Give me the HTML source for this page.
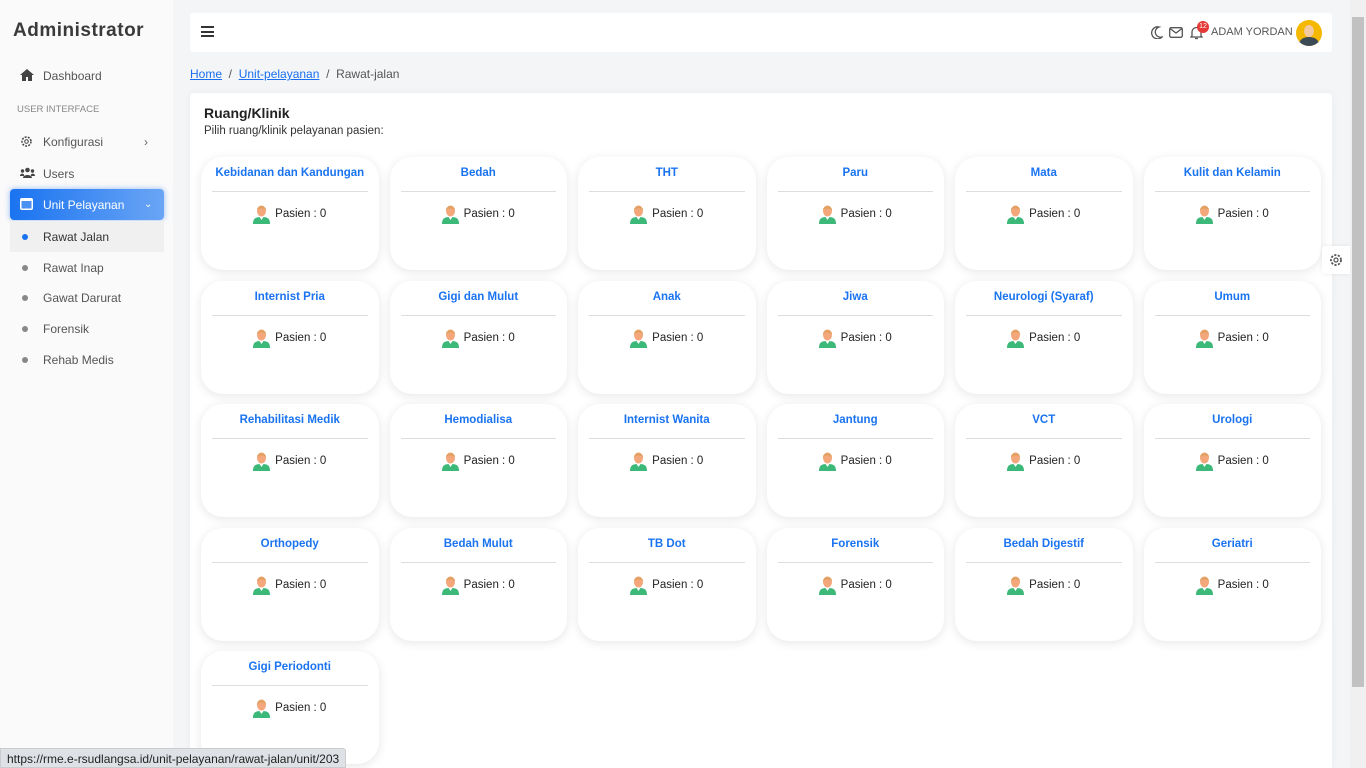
<!DOCTYPE html>
<html><head><meta charset="utf-8"><style>
*{box-sizing:border-box;margin:0;padding:0}
html,body{width:1366px;height:768px;overflow:hidden}
body{background:#f4f5f7;font-family:"Liberation Sans",sans-serif;color:#333;position:relative}
.sb{position:absolute;left:0;top:0;width:173px;height:768px;background:#fafafa}
.sb h1{position:absolute;left:13px;top:20px;font-size:19px;font-weight:bold;color:#3a3a3a;letter-spacing:.5px}
.it{position:absolute;left:10px;width:154px;height:31px;font-size:12px;color:#555;display:flex;align-items:center;padding-left:33px}
.it .ic{position:absolute;left:10px;top:9px}
.dot{position:absolute;left:12px;top:13px;width:6px;height:6px;border-radius:50%;background:#888}
.act{background:linear-gradient(90deg,#1a73f0,#6aa5f5);color:#fff;border-radius:4px;box-shadow:0 0 6px rgba(40,120,240,.5)}
.nav{position:absolute;left:190px;top:13px;width:1142px;height:39px;background:#fff;border-radius:3px}
.bc{position:absolute;left:190px;top:67px;font-size:12px;color:#555}
.bc a{color:#1a6ff0;text-decoration:underline}
.main{position:absolute;left:190px;top:93px;width:1142px;height:675px;background:#fff;border-radius:4px 4px 0 0;box-shadow:0 0 8px rgba(0,0,0,.05)}
.main h2{position:absolute;left:14px;top:12px;font-size:14px;color:#222}
.main p{position:absolute;left:14px;top:32px;font-size:11.5px;color:#333}
.grid{position:absolute;left:11px;top:64px;display:grid;grid-template-columns:repeat(6,177.5px);column-gap:11px;row-gap:10.5px}
.c{height:113px;background:#fff;border-radius:22px;box-shadow:0 2px 10px rgba(0,0,0,.1);position:relative}
.c .t{position:absolute;top:10px;left:0;right:0;text-align:center;font-size:11.5px;font-weight:bold;color:#1a73f0}
.c .l{position:absolute;top:34px;left:11px;right:11px;border-top:1px solid #ddd}
.c .pz{position:absolute;top:47px;left:0;right:0;display:flex;justify-content:center;align-items:center;font-size:11.5px;color:#222;gap:5px}
.scr{position:absolute;right:0;top:0;width:16px;height:768px;background:#f0f0f0}
.scr div{position:absolute;left:2px;top:17px;width:12px;height:670px;background:#c1c1c1}
.status{position:absolute;left:0;top:748px;height:20px;padding:0 6px;background:#dee1e6;font-size:12px;line-height:20px;color:#222;border:1px solid #ccc;border-radius:0 3px 0 0}
</style></head><body>
<div class="sb">
<h1>Administrator</h1>
<div class="it" style="top:60px"><svg class="ic" width="14" height="12" viewBox="0 0 14 12"><path d="M7 0L0 6h2v6h4V8h2v4h4V6h2z" fill="#444"/></svg>Dashboard</div>
<div style="position:absolute;left:17px;top:104px;font-size:9.5px;color:#888">USER INTERFACE</div>
<div class="it" style="top:126px"><svg class="ic" width="13" height="13" viewBox="0 0 13 13"><circle cx="6.5" cy="6.5" r="4.5" fill="none" stroke="#444" stroke-width="1.5" stroke-dasharray="2 1.2"/><circle cx="6.5" cy="6.5" r="1.8" fill="none" stroke="#444"/></svg>Konfigurasi<span style="position:absolute;left:134px;color:#666">›</span></div>
<div class="it" style="top:158px"><svg class="ic" width="15" height="12" viewBox="0 0 15 12"><circle cx="7.5" cy="3" r="2.3" fill="#444"/><circle cx="2.5" cy="4" r="1.7" fill="#444"/><circle cx="12.5" cy="4" r="1.7" fill="#444"/><path d="M3 11c0-4 9-4 9 0zM0 9c0-3 4-3 4-1v1zM15 9c0-3-4-3-4-1v1z" fill="#444"/></svg>Users</div>
<div class="it act" style="top:189px"><svg class="ic" width="13" height="12" viewBox="0 0 13 12"><rect x="0" y="0" width="13" height="12" rx="2" fill="#fff"/><rect x="1.5" y="3" width="10" height="7.5" fill="#4a8ff2"/></svg>Unit Pelayanan<span style="position:absolute;left:134px;font-size:10px">⌄</span></div>
<div class="it" style="top:221px;background:#f0f0f0;color:#333"><span class="dot" style="background:#1a73f0"></span>Rawat Jalan</div>
<div class="it" style="top:252px"><span class="dot"></span>Rawat Inap</div>
<div class="it" style="top:282px"><span class="dot"></span>Gawat Darurat</div>
<div class="it" style="top:313px"><span class="dot"></span>Forensik</div>
<div class="it" style="top:344px"><span class="dot"></span>Rehab Medis</div>
</div>
<div class="nav">
<div style="position:absolute;left:11px;top:13px;width:13px;height:11px;border-top:2px solid #333;border-bottom:2px solid #333"><div style="margin-top:2.5px;border-top:2px solid #333"></div></div>
<svg style="position:absolute;left:961px;top:13px" width="12" height="13" viewBox="0 0 12 13"><path d="M8 1a6 6 0 1 0 3 10A5 5 0 0 1 8 1z" fill="none" stroke="#555" stroke-width="1.3"/></svg>
<svg style="position:absolute;left:979px;top:14px" width="14" height="11" viewBox="0 0 14 11"><rect x=".7" y=".7" width="12.6" height="9.6" rx="1.5" fill="none" stroke="#555" stroke-width="1.3"/><path d="M1 1.5l6 4.5 6-4.5" fill="none" stroke="#555" stroke-width="1.3"/></svg>
<svg style="position:absolute;left:1000px;top:13px" width="13" height="14" viewBox="0 0 13 14"><path d="M2 10V6a4.5 4.5 0 0 1 9 0v4l1 1H1z" fill="none" stroke="#555" stroke-width="1.3"/><path d="M5 12.5h3" stroke="#555" stroke-width="1.3"/></svg>
<div style="position:absolute;left:1007px;top:8px;width:12px;height:12px;border-radius:50%;background:#e53935;color:#fff;font-size:7px;text-align:center;line-height:12px">12</div>
<div style="position:absolute;left:1021px;top:13px;font-size:11px;color:#555">ADAM YORDAN</div>
<div style="position:absolute;left:1106px;top:7px;width:26px;height:26px;border-radius:50%;background:#f5b800;overflow:hidden"><div style="position:absolute;left:8px;top:5px;width:10px;height:12px;border-radius:50%;background:#f2c9a0"></div><div style="position:absolute;left:3px;top:17px;width:20px;height:14px;border-radius:50%;background:#3c4a55"></div></div>
</div>
<div class="bc"><a>Home</a> &nbsp;/&nbsp; <a>Unit-pelayanan</a> &nbsp;/&nbsp; Rawat-jalan</div>
<div class="main">
<h2>Ruang/Klinik</h2>
<p>Pilih ruang/klinik pelayanan pasien:</p>
<div class="grid" id="g"></div>
</div>
<div style="position:absolute;left:1322px;top:246px;width:28px;height:28px;background:#fff;border-radius:3px 0 0 3px;box-shadow:0 0 4px rgba(0,0,0,.08)"><svg style="margin:7px" width="14" height="14" viewBox="0 0 14 14"><circle cx="7" cy="7" r="5" fill="none" stroke="#555" stroke-width="1.8" stroke-dasharray="2.2 1.4"/><circle cx="7" cy="7" r="2" fill="none" stroke="#555" stroke-width="1.2"/></svg></div>
<div class="scr"><div></div></div>
<div class="status">https://rme.e-rsudlangsa.id/unit-pelayanan/rawat-jalan/unit/203</div>
<script>
var n=["Kebidanan dan Kandungan","Bedah","THT","Paru","Mata","Kulit dan Kelamin","Internist Pria","Gigi dan Mulut","Anak","Jiwa","Neurologi (Syaraf)","Umum","Rehabilitasi Medik","Hemodialisa","Internist Wanita","Jantung","VCT","Urologi","Orthopedy","Bedah Mulut","TB Dot","Forensik","Bedah Digestif","Geriatri","Gigi Periodonti"];
var ic='<svg width="17" height="20" viewBox="0 0 17 20"><path d="M0 20c0-6 3-7 8.5-7s8.5 1 8.5 7z" fill="#3cb878"/><path d="M6.5 13l2 3 2-3z" fill="#fff"/><ellipse cx="8.5" cy="7" rx="4.5" ry="5.5" fill="#f4a77a"/><path d="M4 6c0-5 9-5 9 0-2-2-7-2-9 0z" fill="#e0a060"/></svg>';
document.getElementById('g').innerHTML=n.map(function(x){return '<div class="c"><div class="t">'+x+'</div><div class="l"></div><div class="pz">'+ic+'Pasien : 0</div></div>'}).join('');
</script>
</body></html>
